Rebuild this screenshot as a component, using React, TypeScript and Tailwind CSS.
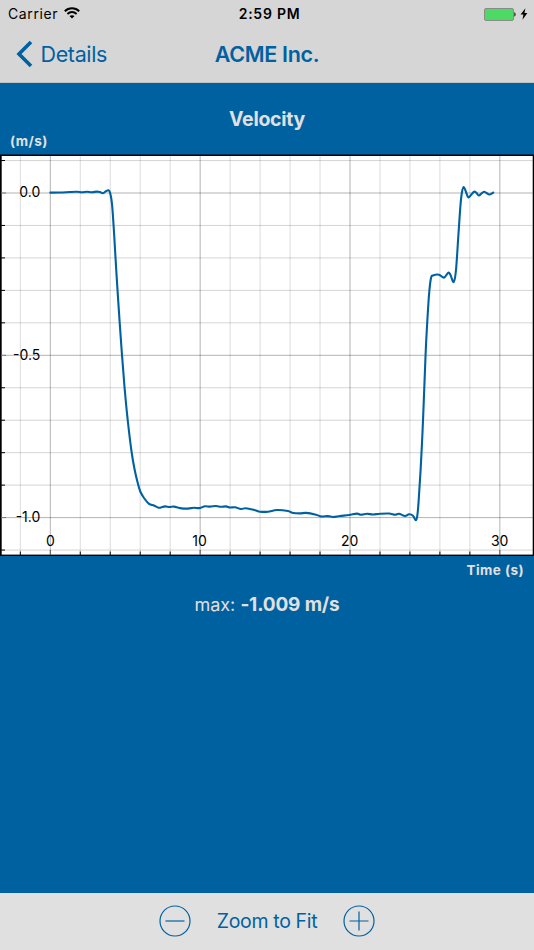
import { useState } from "react";

type Point = [number, number];

const CHART = { width: 534, height: 402 };
const ORIGIN = { x: 50.3, y: 38.7 };
const STEP = { x: 29.97, y: 32.46 };

// Sampled velocity trace, in chart pixels
const trace: Point[] = [
  [50.3, 38.6], [60, 38.5], [70, 38], [77, 37.8], [82, 38.2], [87, 37.8], [92, 38.2], [97, 37.6],
  [100, 38.1], [103, 39.3], [106, 37.2], [108.3, 36.2], [110, 38.5], [112, 50], [114, 78], [116.3, 117],
  [119.5, 166], [122, 201], [124.6, 234], [127.7, 266], [131.6, 298], [134.7, 316], [138, 330],
  [140.3, 337.5], [144, 344], [149, 349.8], [154, 351.5], [158.5, 353.7], [161, 353.5], [165, 352.4],
  [169.5, 353], [174, 352.6], [180, 354.1], [188, 354.6], [193.5, 353.7], [199.5, 354.1], [205, 352.3],
  [210, 352.6], [216, 352], [221, 352.8], [226, 352.4], [230, 353.5], [235, 353.3], [241, 355],
  [246, 354.2], [255, 356.2], [260, 357.7], [268, 357.7], [277, 356], [288, 357], [292, 358.7],
  [300, 359.4], [306, 358.9], [316, 360.7], [321, 362.4], [328, 362.1], [333, 363], [340, 362],
  [349, 361], [357, 359.6], [361, 360.8], [367, 359.8], [373, 360.5], [380, 359.8], [389, 359.5],
  [395, 360.8], [399, 359.8], [405, 362], [409, 360.3], [413, 361.7], [415.8, 366.3], [417.4, 361],
  [418.7, 346], [420.6, 316], [422.6, 276], [424.2, 236], [425.6, 200], [426.8, 176], [429, 141],
  [431, 124], [433, 121.5], [439, 120.7], [444, 123.6], [448.3, 118.7], [450.5, 121], [453.7, 128],
  [456, 116], [458.4, 81], [460.5, 51], [462, 38], [463.8, 33], [466, 38], [468.3, 43.4], [471, 41],
  [474, 37.7], [476.5, 38.8], [479, 41.5], [484, 37.8], [489, 40.5], [493.3, 38.5],
];

function smoothPath(points: Point[]) {
  let d = `M${points[0][0]} ${points[0][1]}`;
  for (let i = 0; i < points.length - 1; i++) {
    const p0 = points[i - 1] ?? points[i];
    const p1 = points[i];
    const p2 = points[i + 1];
    const p3 = points[i + 2] ?? p2;
    d += ` C${p1[0] + (p2[0] - p0[0]) / 6} ${p1[1] + (p2[1] - p0[1]) / 6} ${p2[0] - (p3[0] - p1[0]) / 6} ${p2[1] - (p3[1] - p1[1]) / 6} ${p2[0]} ${p2[1]}`;
  }
  return d;
}

function StatusBar() {
  return (
    <div className="grid h-7 grid-cols-3 items-center pl-2 pr-1.5 text-[14px] leading-none text-black">
      <div className="flex items-center gap-1.5">
        <span className="tracking-[0.6px]">Carrier</span>
        <svg className="mb-0.5" width="16" height="12" viewBox="0 0 16 12" fill="none" stroke="#000" strokeWidth="2">
          <path d="M0.8 4.2C4.8 0.3 11.2 0.3 15.2 4.2" />
          <path d="M3.4 6.9C6 4.5 10 4.5 12.6 6.9" />
          <path d="M5.5 9.1C6.9 7.8 9.1 7.8 10.5 9.1L8 11.6Z" fill="#000" stroke="none" />
        </svg>
      </div>
      <span className="pl-[3px] text-center font-semibold tracking-[0.75px]">2:59 PM</span>
      <div className="flex items-center justify-end">
        <svg width="32" height="13" viewBox="0 0 32 13">
          <rect x="0.5" y="0.5" width="29" height="12" rx="1.5" fill="#4cd964" stroke="#8a8a8a" />
          <path d="M30.4 4.3C31.9 4.8 31.9 8.2 30.4 8.7Z" fill="#000" />
        </svg>
        <svg className="ml-1" width="8" height="12" viewBox="0 0 8 12" fill="#000">
          <path d="M5.4 0.3L0.6 6.6H3.4L2.5 11.7L7.4 5.1H4.5Z" />
        </svg>
      </div>
    </div>
  );
}

function NavBar() {
  return (
    <div className="grid flex-1 grid-cols-3 items-center px-4 pb-0.5 text-[#0061a1]">
      <button className="flex items-center gap-[7.5px] text-[21.5px] tracking-[-0.35px]">
        <svg width="17" height="28" viewBox="0 0 17 28" fill="none" stroke="currentColor" strokeWidth="3.6">
          <path d="M15 2L3 14L15 26" />
        </svg>
        <span>Details</span>
      </button>
      <h1 className="whitespace-nowrap text-center text-[21.5px] font-semibold tracking-[-0.33px]">ACME Inc.</h1>
    </div>
  );
}

function VelocityChart() {
  const columns = Array.from({ length: 17 }, (_, i) => i - 1);
  const rows = Array.from({ length: 13 }, (_, i) => i - 1);

  return (
    <svg className="block" width={CHART.width} height={CHART.height} viewBox={`0 0 ${CHART.width} ${CHART.height}`}>
      <rect y="0.5" width="534" height="401.5" fill="#000" />
      <rect x="1.7" y="2" width="531" height="398.6" fill="#fff" />

      {columns.map((i) => {
        const x = ORIGIN.x + i * STEP.x;
        const major = i % 5 === 0;
        return (
          <g key={i}>
            <line x1={x} x2={x} y1="2" y2="400.6" stroke="#000" strokeOpacity={major ? 0.3 : 0.14} />
            <line x1={x} x2={x} y1={major ? 396 : 397.5} y2="401" stroke={major ? "#555" : "#000"} />
          </g>
        );
      })}
      {rows.map((i) => {
        const y = ORIGIN.y + 0.3 + i * STEP.y;
        const major = i % 5 === 0;
        return (
          <g key={i}>
            <line x1="1.7" x2="532.7" y1={y} y2={y} stroke="#000" strokeOpacity={major ? 0.3 : 0.17} />
            <line x1="1" x2={major ? 6 : 5} y1={y} y2={y} stroke={major ? "#777" : "#000"} />
          </g>
        );
      })}

      <g fontSize="14" fill="#000" textAnchor="end">
        <text x="40.3" y="43.2">0.0</text>
        <text x="40.3" y="205.6">-0.5</text>
        <text x="40.3" y="368">-1.0</text>
      </g>
      <g fontSize="14" fill="#000" textAnchor="middle">
        <text x="50.3" y="391.6">0</text>
        <text x="199.5" y="391.6">10</text>
        <text x="349.7" y="391.6">20</text>
        <text x="499.7" y="391.6">30</text>
      </g>

      <path d={smoothPath(trace)} fill="none" stroke="#0061a1" strokeWidth="2.1" strokeLinecap="round" strokeLinejoin="round" />
    </svg>
  );
}

function ZoomButton({ plus, onClick }: { plus?: boolean; onClick: () => void }) {
  return (
    <button onClick={onClick} aria-label={plus ? "Zoom in" : "Zoom out"}>
      <svg width="32" height="32" viewBox="0 0 32 32" fill="none" stroke="#0061a1" strokeWidth="1.2">
        <circle cx="16" cy="16" r="15" />
        <path d={plus ? "M6.5 16H25.5M16 6.5V25.5" : "M6.5 16H25.5"} />
      </svg>
    </button>
  );
}

export default function App() {
  const [, setZoom] = useState(1);

  return (
    <div className="flex h-[950px] w-[534px] flex-col bg-[#0061a1] font-['Inter',sans-serif] text-[#e0e0e0]">
      <header className="flex h-[83px] flex-col border-b border-[#bfc3c6] bg-[#d6d6d6]">
        <StatusBar />
        <NavBar />
      </header>

      <main className="flex flex-1 flex-col">
        <h2 className="pt-[22px] text-center text-[19.5px] font-bold leading-7 tracking-[-0.3px]">Velocity</h2>
        <div className="h-[21px] pl-2.5 text-[13.5px] font-bold leading-[17px] tracking-[0.45px]">(m/s)</div>
        <VelocityChart />
        <div className="pr-2.5 pt-1 text-right text-[13.5px] font-bold leading-5 tracking-[0.45px]">Time (s)</div>
        <p className="pt-[11px] text-center text-[18px] leading-7">
          max: <span className="text-[19px] font-bold tracking-[-0.15px]">-1.009 m/s</span>
        </p>
      </main>

      <footer className="flex h-[57px] items-center justify-center gap-[25.5px] bg-[#e0e0e0] pb-px text-[#0061a1]">
        <ZoomButton onClick={() => setZoom((z) => z / 2)} />
        <button className="pt-px text-[19.5px] tracking-[-0.35px]" onClick={() => setZoom(1)}>Zoom to Fit</button>
        <ZoomButton plus onClick={() => setZoom((z) => z * 2)} />
      </footer>
    </div>
  );
}
